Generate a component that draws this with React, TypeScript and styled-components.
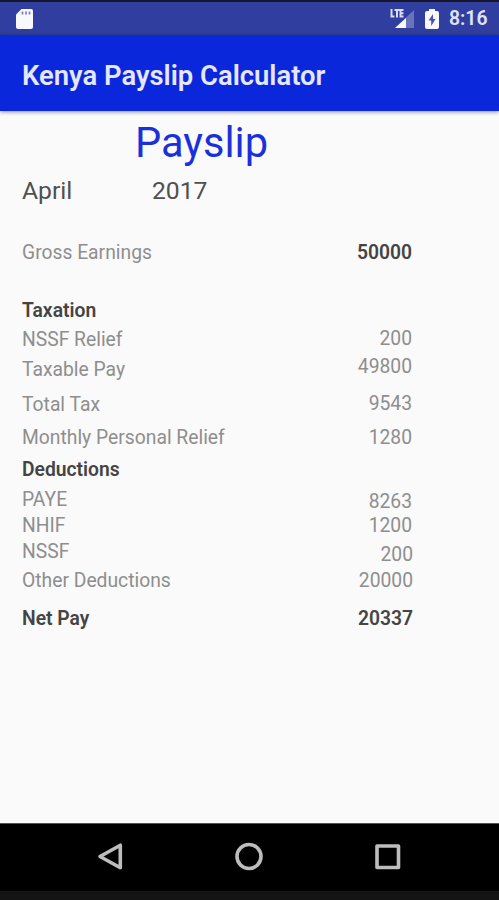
import React from "react";
import styled, { createGlobalStyle } from "styled-components";

const GlobalStyle = createGlobalStyle`
  *, *::before, *::after { box-sizing: border-box; }
  body { margin: 0; background: #fafafa; font-family: Roboto, "Noto Sans", sans-serif; }
`;

const Screen = styled.div`
  width: 499px;
  height: 900px;
  display: flex;
  flex-direction: column;
  overflow: hidden;
  background: #fafafa;
`;

const StatusBar = styled.div`
  height: 35px;
  flex: none;
  display: flex;
  align-items: center;
  padding: 0 11px 0 15px;
  border-top: 2px solid #15162b;
  background: #303f9f;
  color: #e0e3f8;
`;

const StatusIcons = styled.div`
  margin-left: auto;
  display: flex;
  align-items: center;
  gap: 9px;
`;

const Clock = styled.span`
  width: 39px;
  font-size: 19.4px;
  line-height: 22px;
  font-weight: 600;
  white-space: nowrap;
`;

const AppBar = styled.header`
  height: 76px;
  flex: none;
  display: flex;
  align-items: center;
  padding: 5px 22px 0;
  background: #0b27dc;
  color: #e4e7ff;
  box-shadow: 0 1px 4px rgba(0, 0, 0, 0.45);
`;

const AppTitle = styled.h1`
  margin: 0;
  font-size: 27.4px;
  line-height: 32px;
  font-weight: 600;
  white-space: nowrap;
`;

const Content = styled.main`
  flex: 1;
  min-height: 0;
  padding: 7px 87px 0 22px;
`;

const Heading = styled.h2`
  margin: 0 0 0 113px;
  font-size: 41.6px;
  line-height: 50px;
  font-weight: 400;
  color: #1a31da;
`;

const Period = styled.div`
  display: grid;
  grid-template-columns: 130px 1fr;
  margin-top: 8px;
  font-size: 24.7px;
  line-height: 30px;
  color: #505050;
`;

const Ledger = styled.div`
  display: flex;
  justify-content: space-between;
  margin-top: 37px;
`;

const Column = styled.div<{ $end?: boolean }>`
  display: flex;
  flex-direction: column;
  align-items: ${(p) => (p.$end ? "flex-end" : "flex-start")};
`;

const Entry = styled.div<{ $gap: number; $strong?: boolean; $shift?: number }>`
  margin-top: ${(p) => p.$gap}px;
  margin-right: ${(p) => -(p.$shift ?? 0)}px;
  font-size: 19.3px;
  line-height: 20px;
  white-space: nowrap;
  font-weight: ${(p) => (p.$strong ? 600 : 400)};
  color: ${(p) => (p.$strong ? "#444" : "#8e8e8e")};
`;

const NavBar = styled.nav`
  height: 77px;
  flex: none;
  display: flex;
  justify-content: center;
  gap: 108px;
  padding-top: 18px;
  border-top: 1px solid #555;
  border-bottom: 9px solid #141414;
  background: #000;
`;

const NavIcon = styled.svg`
  width: 31px;
  height: 31px;
  fill: none;
  stroke: #bdbdbd;
  stroke-width: 3.6;
  stroke-linejoin: round;
`;

type Item = { text: string; gap: number; strong?: boolean; shift?: number };

const labels: Item[] = [
  { text: "Gross Earnings", gap: 0 },
  { text: "Taxation", gap: 38, strong: true },
  { text: "NSSF Relief", gap: 9 },
  { text: "Taxable Pay", gap: 10 },
  { text: "Total Tax", gap: 15 },
  { text: "Monthly Personal Relief", gap: 13 },
  { text: "Deductions", gap: 12, strong: true },
  { text: "PAYE", gap: 10 },
  { text: "NHIF", gap: 6 },
  { text: "NSSF", gap: 6 },
  { text: "Other Deductions", gap: 9 },
  { text: "Net Pay", gap: 18, strong: true },
];

const amounts: Item[] = [
  { text: "50000", gap: 0, strong: true },
  { text: "200", gap: 66 },
  { text: "49800", gap: 8 },
  { text: "9543", gap: 17 },
  { text: "1280", gap: 14 },
  { text: "8263", gap: 44 },
  { text: "1200", gap: 4 },
  { text: "200", gap: 9, shift: 1 },
  { text: "20000", gap: 6, shift: 1 },
  { text: "20337", gap: 18, strong: true, shift: 1 },
];

const SdCardIcon = () => (
  <svg width="19" height="22" viewBox="0 0 19 22">
    <path d="M6.5 1H16q2 0 2 2v16q0 2-2 2H3q-2 0-2-2V6.5Z" fill="#f8f9ff" />
    <path d="M7.5 3.5v3M11 3.5v3M14.5 3.5v3" stroke="#7e86c4" strokeWidth="1.8" />
  </svg>
);

const SignalIcon = () => (
  <svg width="26" height="24" viewBox="0 0 26 24">
    <path d="M25 3v18H6Z" fill="#6873bb" />
    <path d="M17 11v10H6Z" fill="#f8f9ff" />
    <path d="M2.5 2v7.5h3M5.5 3h5M8 3v7.5M14.5 3h-3v6.5h3M11.5 6.3h3" fill="none" stroke="#d9dcf4" strokeWidth="2" />
  </svg>
);

const BatteryIcon = () => (
  <svg width="16" height="22" viewBox="0 0 16 22">
    <path d="M5 1h6v2h2q2 0 2 2v14q0 2-2 2H3q-2 0-2-2V5q0-2 2-2h2Z" fill="#f8f9ff" />
    <path d="M9 6v5h2.6l-4.4 7v-5.5H4.6Z" fill="#4653a8" />
  </svg>
);

const renderItems = (items: Item[]) =>
  items.map((item, i) => (
    <Entry key={i} $gap={item.gap} $strong={item.strong} $shift={item.shift}>
      {item.text}
    </Entry>
  ));

export default function App() {
  return (
    <Screen>
      <GlobalStyle />
      <StatusBar>
        <SdCardIcon />
        <StatusIcons>
          <SignalIcon />
          <BatteryIcon />
          <Clock>8:16</Clock>
        </StatusIcons>
      </StatusBar>
      <AppBar>
        <AppTitle>Kenya Payslip Calculator</AppTitle>
      </AppBar>
      <Content>
        <Heading>Payslip</Heading>
        <Period>
          <span>April</span>
          <span>2017</span>
        </Period>
        <Ledger>
          <Column>{renderItems(labels)}</Column>
          <Column $end>{renderItems(amounts)}</Column>
        </Ledger>
      </Content>
      <NavBar>
        <NavIcon viewBox="0 0 31 31">
          <path d="M5 14.5 25.3 3.2V25.8Z" />
        </NavIcon>
        <NavIcon viewBox="0 0 31 31">
          <circle cx="15" cy="14.5" r="12" />
        </NavIcon>
        <NavIcon viewBox="0 0 31 31">
          <rect x="4" y="4" width="21.5" height="21.5" />
        </NavIcon>
      </NavBar>
    </Screen>
  );
}
